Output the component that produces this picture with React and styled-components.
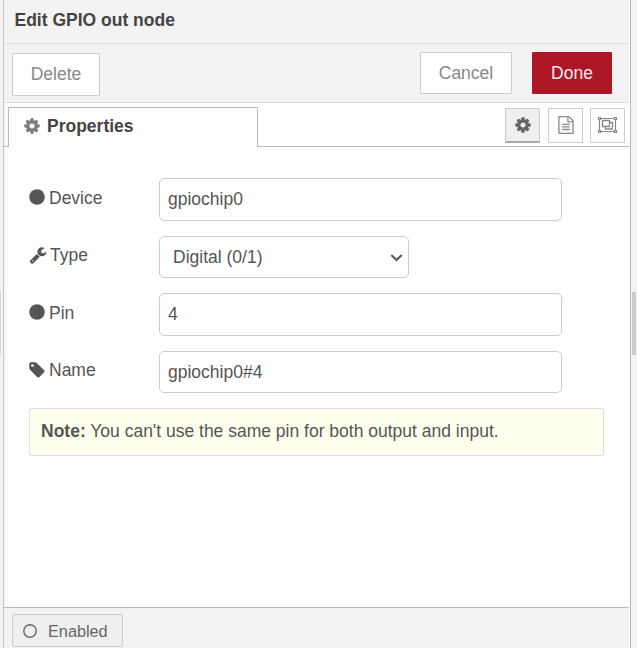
import React from "react";
import styled, { createGlobalStyle, css } from "styled-components";

const GlobalStyle = createGlobalStyle`
  *, *::before, *::after { box-sizing: border-box; }
  body {
    margin: 0;
    overflow: hidden;
    background: #f3f3f3;
    color: #555;
    font: 17.5px/25px "Liberation Sans", Arial, sans-serif;
  }
`;

const Workspace = styled.div`
  display: flex;
  height: 648px;
  background: #f3f3f3;
`;

const Gutter = styled.div`
  flex: none;
  display: flex;
  width: ${(p) => p.$width}px;
  padding: 292px 0 0 ${(p) => p.$inset || 0}px;
`;

const Grip = styled.div`
  width: ${(p) => p.$width}px;
  height: 63px;
  background: ${(p) => p.$color};
`;

const Tray = styled.main`
  flex: 1;
  display: flex;
  flex-direction: column;
  min-width: 0;
  background: #fff;
  border-left: 1px solid #c8c8c8;
  border-right: 1px solid #bbb;
`;

const Body = styled.div`
  flex: 1;
  display: flex;
  flex-direction: column;
  margin-right: 1px;
  background: linear-gradient(to right, #f5f5f5, #fff 5px);
`;

const Header = styled.header`
  height: 44px;
  padding: 8px 11px 0 10.5px;
  border-bottom: 1px solid #ddd;
  background: #f3f3f3;
  color: #444;
  font-weight: bold;
`;

const Toolbar = styled.div`
  display: flex;
  align-items: flex-start;
  height: 59px;
  padding: 8px 17px 0 8px;
  border-bottom: 1px solid #ddd;
  background: #f3f3f3;
`;

const Button = styled.button`
  width: ${(p) => p.$width}px;
  height: 42px;
  margin: 0;
  padding: 0;
  border: 1px solid #ccc;
  border-radius: 1px;
  background: #fff;
  color: #888;
  font: inherit;
  ${(p) => p.$first && css`
    height: 43px;
    margin: 1px auto 0 0;
    padding-bottom: 1px;
  `}
  ${(p) => p.$primary && css`
    margin-left: 20px;
    border-color: #ad1625;
    background: #ad1625;
    color: #eee;
  `}
`;

const TabBar = styled.div`
  display: flex;
  height: 44px;
`;

const TabLine = styled.div`
  width: ${(p) => p.$width}px;
  border-bottom: 1px solid #bbb;
`;

const Tab = styled.div`
  display: flex;
  align-items: center;
  width: 250px;
  height: 40px;
  margin-top: 4px;
  padding: 0 0 2px 14px;
  border: 1px solid #bbb;
  border-bottom: 0;
  background: #fff;
  color: #444;
  font-weight: bold;
  svg { margin: 0 6px 2px 0; color: #7c7c7c; }
`;

const TabActions = styled.div`
  flex: 1;
  display: flex;
  justify-content: flex-end;
  padding: 5px 4px 0 0;
  border-bottom: 1px solid #bbb;
`;

const IconButton = styled.button`
  display: flex;
  align-items: center;
  justify-content: center;
  width: 35px;
  height: 35px;
  margin: 0 0 0 ${(p) => p.$gap || 0}px;
  padding: 0 0 1px;
  border: 1px solid #ccc;
  background: #fff;
  color: #888;
  ${(p) => p.$selected && css`
    border-bottom: 2px solid #aaa;
    background: #efefef;
    color: #666;
  `}
`;

const Form = styled.form`
  flex: 1;
  display: flex;
  flex-direction: column;
  gap: 15px;
  padding: 31px 25px 0;
`;

const Row = styled.div`
  display: flex;
  height: ${(p) => p.$height}px;
`;

const Label = styled.label`
  display: flex;
  align-items: center;
  width: 130px;
  height: ${(p) => p.$height || 38}px;
  svg { margin: 0 3px ${(p) => p.$lift || 0}px ${(p) => p.$indent ?? -1}px; }
`;

const control = css`
  height: 100%;
  border: 1px solid #ccc;
  border-radius: 5px;
  background: #fff;
  color: #555;
  font: inherit;
  outline: none;
`;

const Input = styled.input`
  ${control}
  width: 403px;
  padding: 0 8px;
`;

const Select = styled.div`
  ${control}
  display: flex;
  align-items: center;
  justify-content: space-between;
  width: 250px;
  padding: 0 5px 0 13px;
`;

const Note = styled.div`
  height: 48px;
  padding: 10px 11px;
  border: 1px solid #ddd;
  border-radius: 2px;
  background: #ffffee;
`;

const Footer = styled.footer`
  height: 41px;
  padding: 6px 8px 0;
  border-top: 1px solid #bbb;
  background: #f3f3f3;
`;

const Toggle = styled.button`
  display: flex;
  align-items: center;
  width: 111px;
  height: 33px;
  padding: 0 0 0 10px;
  border: 1px solid #ccc;
  border-radius: 2px;
  background: #efefef;
  color: #666;
  font: 16.25px/20px "Liberation Sans", Arial, sans-serif;
  svg { margin-right: 10px; }
`;

const COG = "M1152 896q0-106-75-181t-181-75-181 75-75 181 75 181 181 75 181-75 75-181zm512-109v222q0 12-8 23t-20 13l-185 28q-19 54-39 91 35 50 107 138 10 12 10 25t-9 23q-27 37-99 108t-94 71q-12 0-26-9l-138-108q-44 23-91 38-16 136-29 186-7 28-36 28h-222q-14 0-24.500-8.500t-11.500-21.500l-28-184q-49-16-90-37l-141 107q-10 9-25 9-14 0-25-11-126-114-165-168-7-10-7-23 0-12 8-23 15-21 51-66.500t54-70.500q-27-50-41-99l-183-27q-13-2-21-12.500t-8-23.500v-222q0-12 8-23t19-13l186-28q14-46 39-92-40-57-107-138-10-12-10-24 0-10 9-23 26-36 98.500-107.500t94.500-71.500q13 0 26 10l138 107q44-23 91-38 16-136 29-186 7-28 36-28h222q14 0 24.500 8.500t11.500 21.500l28 184q49 16 90 37l142-107q9-9 24-9 13 0 25 10 129 119 165 170 7 8 7 22 0 12-8 23-15 21-51 66.500t-54 70.500q26 50 41 98l183 28q13 2 21 12.500t8 23.500z";
const WRENCH = "M448 1472q0-26-19-45t-45-19-45 19-19 45 19 45 45 19 45-19 19-45zm644-420l-682 682q-37 37-90 37-52 0-91-37l-106-108q-38-36-38-90 0-53 38-91l681-681q39 98 114.500 173.500t173.500 114.500zm634-435q0 39-23 106-47 134-164.500 217.500t-258.500 83.500q-185 0-316.500-131.500t-131.500-316.500 131.500-316.500 316.500-131.500q58 0 121.500 16.500t107.500 46.500q16 11 16 28t-16 28l-293 169v224l193 107q5-3 79-48.500t135.500-81 70.500-35.500q15 0 23.500 10t8.500 25z";
const TAG = "M576 448q0-53-37.500-90.500t-90.500-37.500-90.500 37.500-37.500 90.500 37.500 90.500 90.500 37.500 90.500-37.500 37.500-90.500zm1067 576q0 53-37 90l-491 492q-39 37-91 37-53 0-90-37l-715-716q-38-37-64.500-101t-26.500-117v-416q0-52 38-90t90-38h416q53 0 117 26.500t102 64.500l715 714q37 39 37 91z";
const FILE = "M1596 380q28 28 48 76t20 88v1152q0 40-28 68t-68 28h-1344q-40 0-68-28t-28-68v-1600q0-40 28-68t68-28h896q40 0 88 20t76 48zm-444-244v376h376q-10-29-22-41l-313-313q-12-12-41-22zm384 1528v-1024h-416q-40 0-68-28t-28-68v-416h-768v1536h1280zm-1024-864q0-14 9-23t23-9h704q14 0 23 9t9 23v64q0 14-9 23t-23 9h-704q-14 0-23-9t-9-23v-64zm736 224q14 0 23 9t9 23v64q0 14-9 23t-23 9h-704q-14 0-23-9t-9-23v-64q0-14 9-23t23-9h704zm0 256q14 0 23 9t9 23v64q0 14-9 23t-23 9h-704q-14 0-23-9t-9-23v-64q0-14 9-23t23-9h704z";

const Glyph = ({ d, size = 18 }) => (
  <svg width={size} height={size} viewBox="0 0 1792 1792" fill="currentColor" aria-hidden="true">
    <path d={d} />
  </svg>
);

const Dot = () => (
  <svg width="18" height="18" viewBox="0 0 18 18" aria-hidden="true">
    <circle cx="9" cy="9" r="7.800" fill="currentColor" />
  </svg>
);

const GroupIcon = () => (
  <svg width="21" height="18" viewBox="0 0 21 18" fill="none" stroke="currentColor" aria-hidden="true">
    <path strokeWidth="1.200" d="M4 2.500h13M4 15.500h13M2.500 4v10M18.500 4v10" />
    <path strokeWidth="1.200" d="M1.500 1.500h2v2h-2zM17.500 1.500h2v2h-2zM1.500 14.500h2v2h-2zM17.500 14.500h2v2h-2z" />
    <path strokeWidth="1.300" d="M5.500 4.500h7v6h-7zM12.500 6.500h3v6.500H8.500v-2.500" />
  </svg>
);

const Ring = () => (
  <svg width="15" height="15" viewBox="0 0 15 15" fill="none" stroke="currentColor" aria-hidden="true">
    <circle cx="7" cy="8" r="6.200" strokeWidth="1.400" />
  </svg>
);

const Chevron = () => (
  <svg width="13" height="10" viewBox="0 0 13 10" fill="none" stroke="#555" strokeWidth="2" aria-hidden="true">
    <path d="M1.300 3L6.500 8l5.200-5" />
  </svg>
);

export default function App() {
  return (
    <>
      <GlobalStyle />
      <Workspace>
        <Gutter $width={3}><Grip $width={1} $color="#d8d8d8" /></Gutter>
        <Tray>
          <Body>
            <Header>Edit GPIO out node</Header>
            <Toolbar>
              <Button $width={88} $first>Delete</Button>
              <Button $width={92}>Cancel</Button>
              <Button $width={80} $primary>Done</Button>
            </Toolbar>
            <TabBar>
              <TabLine $width={4} />
              <Tab><Glyph d={COG} />Properties</Tab>
              <TabActions>
                <IconButton $selected aria-label="Properties"><Glyph d={COG} /></IconButton>
                <IconButton $gap={8} aria-label="Description"><Glyph d={FILE} /></IconButton>
                <IconButton $gap={7} aria-label="Appearance"><GroupIcon /></IconButton>
              </TabActions>
            </TabBar>
            <Form>
              <Row $height={43}>
                <Label $height={40} $lift={2}><Dot />Device</Label>
                <Input defaultValue="gpiochip0" />
              </Row>
              <Row $height={42}>
                <Label $indent={0} $lift={1}><Glyph d={WRENCH} />Type</Label>
                <Select>Digital (0/1)<Chevron /></Select>
              </Row>
              <Row $height={43}>
                <Label $height={40} $lift={2}><Dot />Pin</Label>
                <Input defaultValue="4" />
              </Row>
              <Row $height={42}>
                <Label $lift={1}><Glyph d={TAG} />Name</Label>
                <Input defaultValue="gpiochip0#4" />
              </Row>
              <Note><b>Note:</b> You can't use the same pin for both output and input.</Note>
            </Form>
            <Footer>
              <Toggle><Ring />Enabled</Toggle>
            </Footer>
          </Body>
        </Tray>
        <Gutter $width={6} $inset={1}><Grip $width={4} $color="#ccc" /></Gutter>
      </Workspace>
    </>
  );
}
